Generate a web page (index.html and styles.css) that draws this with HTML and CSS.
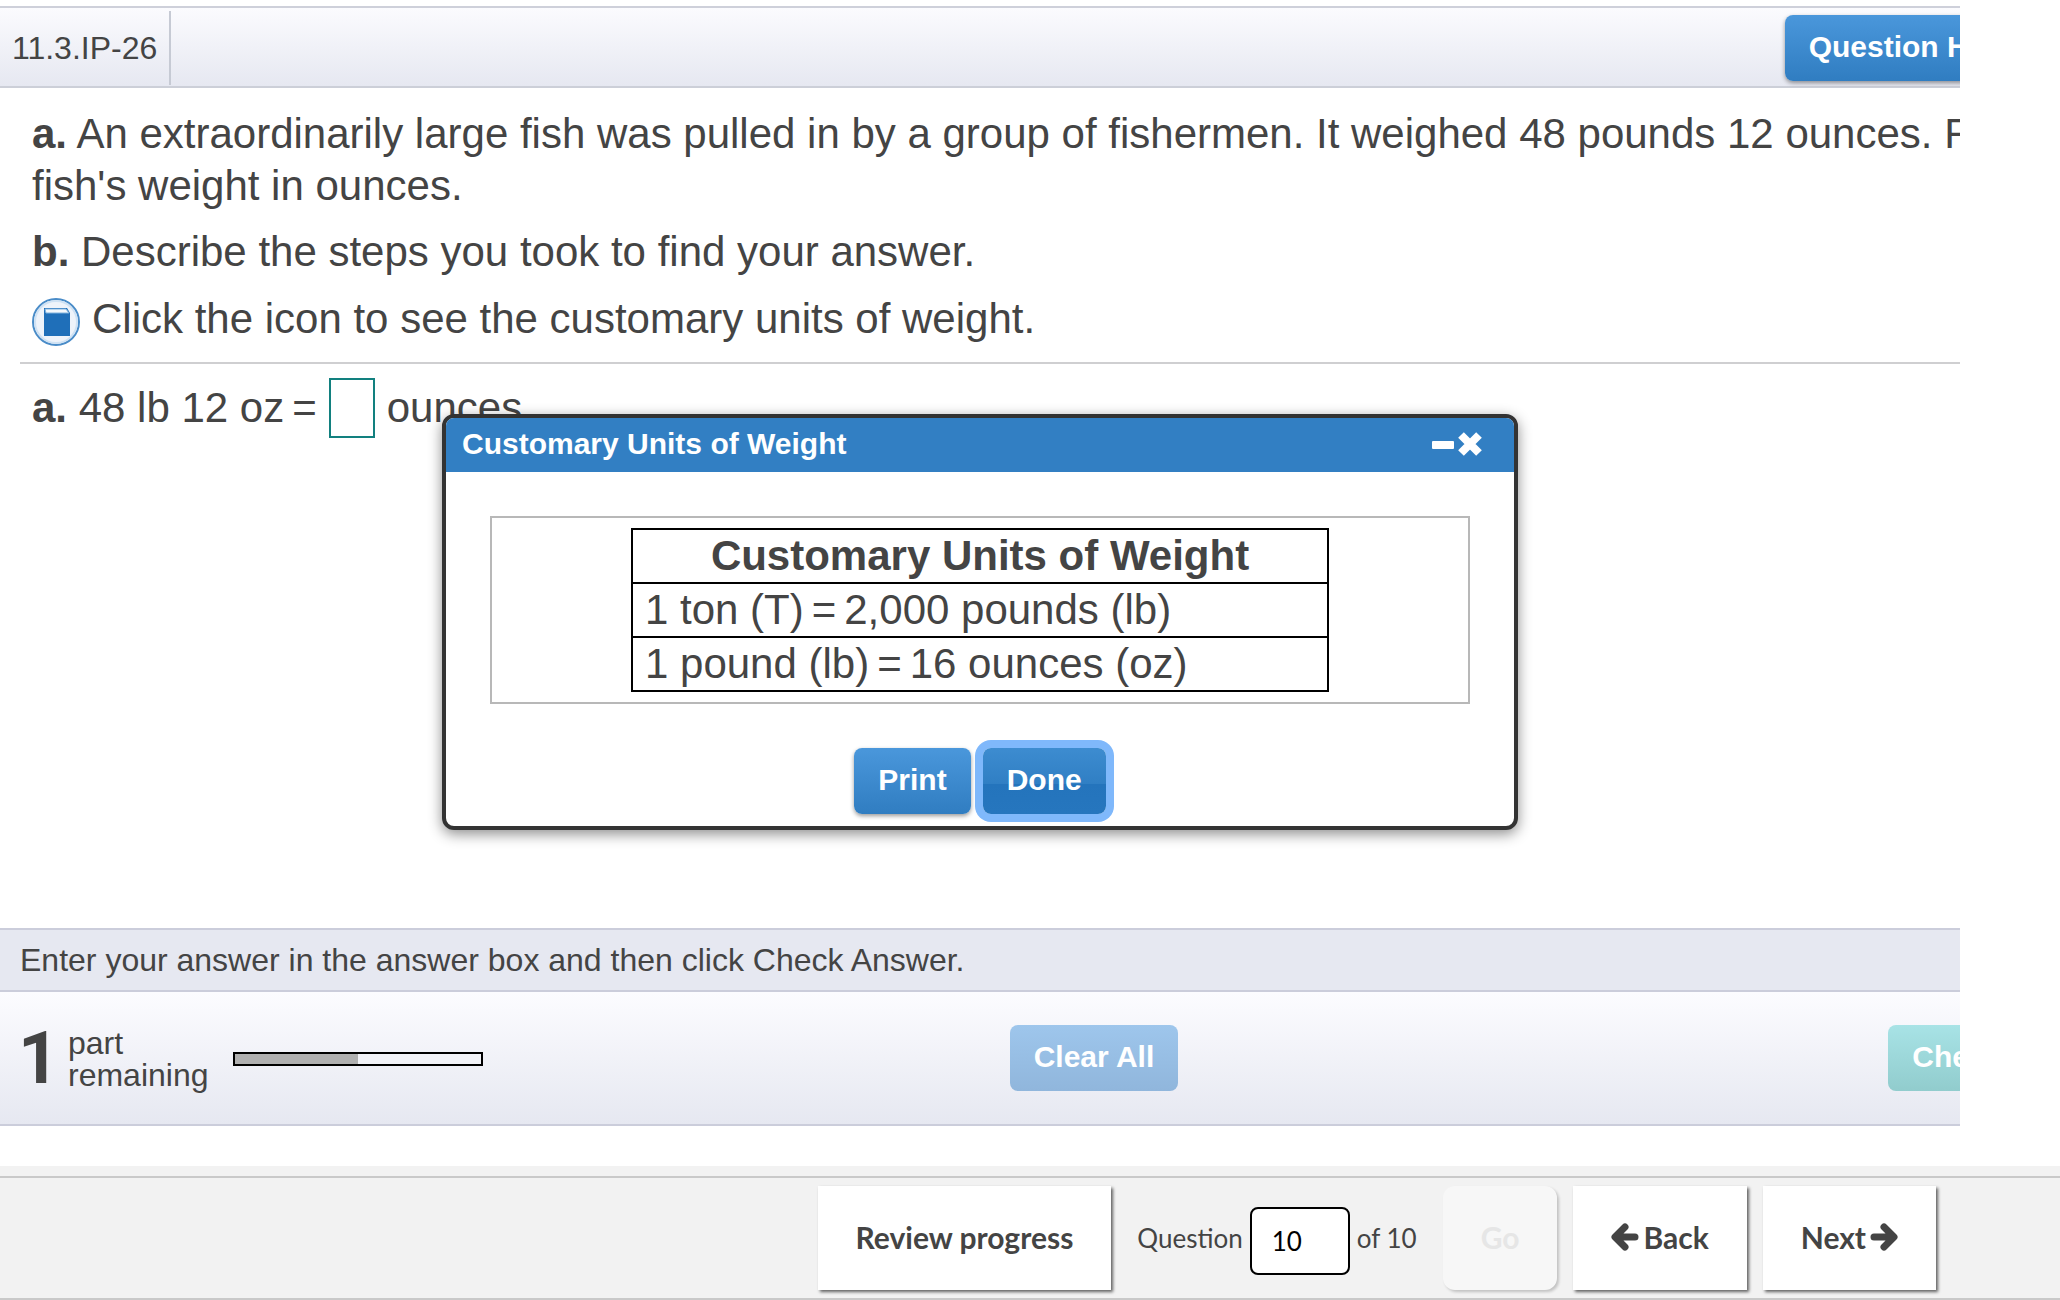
FILE: index.html
```
<!DOCTYPE html>
<html lang="en">
<head>
<meta charset="utf-8">
<title>11.3.IP-26</title>
<link rel="stylesheet" href="styles.css">
</head>

<body>
<main class="player">
    <header class="topbar">
        <div class="exercise-id">11.3.IP-26</div>
        <button type="button" class="btn help">Question Help</button>
    </header>

    <div class="question">
        <p><b>a.</b> An extraordinarily large fish was pulled in by a group of fishermen. It weighed 48 pounds 12 ounces. Find the fish's weight in ounces.</p>
        <p><b>b.</b> Describe the steps you took to find your answer.</p>
        <p class="resource">
            <button type="button" class="icon-btn" aria-label="Customary units of weight">
                <svg width="48" height="48" viewBox="0 0 48 48">
                    <circle cx="24" cy="24" r="23" fill="#eef3fa" stroke="#4a8cc8" stroke-width="2"/>
                    <circle cx="24" cy="24" r="21" fill="none" stroke="#cfe2f4" stroke-width="2"/>
                    <path d="M12 10h23l3 5v23H12z" fill="#1f6fb9"/>
                    <path d="M13 11h21l3 4H14z" fill="#f4f8fc" stroke="#7fb2de"/>
                </svg>
            </button>
            Click the icon to see the customary units of weight.
        </p>
    </div>

    <div class="answer">
        <label for="ounces"><b>a.</b> 48 lb 12 oz<span class="eq">=</span></label>
        <input type="text" id="ounces" class="answer-box">
        <span>ounces</span>
    </div>

    <div class="instruction">Enter your answer in the answer box and then click Check Answer.</div>

    <div class="bottombar">
        <div class="parts">
            <span class="parts-count">1</span>
            <label for="done-parts" class="parts-label">part<br>remaining</label>
            <progress id="done-parts" class="parts-bar" value="1" max="2"></progress>
        </div>
        <button type="button" class="btn clear" disabled>Clear All</button>
        <button type="button" class="btn check" disabled>Check Answer</button>
    </div>

    <!-- popup over the question -->
    <section class="dialog" role="dialog" aria-labelledby="dialog-title">
        <div class="dialog-title">
            <h2 id="dialog-title">Customary Units of Weight</h2>
            <button type="button" class="icon-btn" aria-label="Minimize">
                <svg width="22" height="24" viewBox="0 0 22 24"><rect y="9" width="22" height="8" rx="1" fill="#fff"/></svg>
            </button>
            <button type="button" class="icon-btn" aria-label="Close">
                <svg width="24" height="24" viewBox="0 0 24 24"><path d="M3 3l18 18M21 3L3 21" stroke="#fff" stroke-width="8"/></svg>
            </button>
        </div>
        <div class="frame">
            <table class="units">
                <thead>
                    <tr><th>Customary Units of Weight</th></tr>
                </thead>
                <tbody>
                    <tr><td>1 ton (T)<span class="eq">=</span>2,000 pounds (lb)</td></tr>
                    <tr><td>1 pound (lb)<span class="eq">=</span>16 ounces (oz)</td></tr>
                </tbody>
            </table>
        </div>
        <div class="dialog-buttons">
            <button type="button" class="btn">Print</button>
            <button type="button" class="btn focused">Done</button>
        </div>
    </section>
</main>

<footer class="footer">
    <nav class="nav">
        <button type="button" class="nav-btn">Review progress</button>
        <div class="jump">
            <label for="number">Question</label>
            <input type="text" id="number" class="number" value="10">
            <span>of 10</span>
        </div>
        <button type="button" class="nav-btn go" disabled>Go</button>
        <button type="button" class="nav-btn">
            <svg width="28" height="28" viewBox="0 0 28 28"><path d="M14 4L4 14l10 10M5 14h19" fill="none" stroke="#444" stroke-width="7" stroke-linecap="round" stroke-linejoin="round"/></svg>
            Back
        </button>
        <button type="button" class="nav-btn">
            Next
            <svg width="28" height="28" viewBox="0 0 28 28"><path d="M14 4l10 10-10 10M23 14H4" fill="none" stroke="#444" stroke-width="7" stroke-linecap="round" stroke-linejoin="round"/></svg>
        </button>
    </nav>
</footer>
</body>
</html>
```
FILE: styles.css
```
*{
    box-sizing: border-box;
}
body{
    display: flex;
    flex-direction: column;
    min-height: 100vh;
    margin: 0;
    padding-top: 6px;
    background: #fff;
    color: #444;
    font-family: "Liberation Sans", Arial, sans-serif;
    font-size: 42px;
    line-height: 52px;
}
button, input{
    font-family: inherit;
}

/* exercise pane, its rows run on past the right edge */
.player{
    position: relative;
    flex: 1;
    display: flex;
    flex-direction: column;
    margin-right: 100px;
    overflow: hidden;
}
.topbar, .question, .answer, .instruction, .bottombar{
    width: calc(100% + 228px);
}
.topbar{
    display: flex;
    justify-content: space-between;
    align-items: center;
    height: 82px;
    padding: 2px 152px 0 0;
    border-top: 2px solid #ced0da;
    border-bottom: 2px solid #cccfd8;
    background: linear-gradient(#fbfbfe, #e6e8f1);
}
.exercise-id{
    padding: 0 12px;
    border-right: 2px solid #c6cad4;
    font-size: 32px;
    line-height: 74px;
}
.btn{
    height: 66px;
    padding: 0 24px 2px;
    border: 0;
    border-radius: 8px;
    box-shadow: 0 2px 4px rgba(0, 0, 0, 0.4);
    background: linear-gradient(#4a97db, #307dc1);
    color: #fff;
    font-size: 30px;
    font-weight: bold;
}
.icon-btn{
    padding: 0;
    border: 0;
    background: none;
    line-height: 0;
}
.icon-btn svg{
    display: block;
}

.question{
    margin-left: 20px;
    padding: 20px 20px 16px 12px;
    border-bottom: 2px solid #cfcfd1;
}
.question p{
    margin: 0 0 14px;
}
.question .resource{
    display: flex;
    align-items: center;
    gap: 12px;
    margin: 0;
}
.resource .icon-btn{
    padding-top: 6px;
}
.answer{
    flex: 1;
    display: flex;
    align-items: flex-start;
    gap: 12px;
    padding: 14px 32px;
    line-height: 60px;
}
.eq{
    margin: 0 8px;
}
.answer .eq{
    margin-right: 0;
}
.answer-box{
    width: 46px;
    height: 60px;
    padding: 0 8px;
    border: 2px solid #12807f;
    font-size: 32px;
}
.instruction{
    padding: 0 20px;
    border-top: 2px solid #cbcddb;
    border-bottom: 2px solid #cbcddb;
    background: #e6e8f1;
    font-size: 32px;
    line-height: 60px;
}
.bottombar{
    display: grid;
    grid-template-columns: 1fr auto 1fr;
    align-items: center;
    height: 134px;
    margin-bottom: 40px;
    padding: 0 18px;
    border-bottom: 2px solid #cbcddb;
    background: linear-gradient(#fcfcff, #e6e8f1);
}
.parts{
    display: flex;
    align-items: center;
    padding-top: 2px;
}
.parts-count{
    width: 50px;
    font-family: Roboto, sans-serif;
    font-size: 72px;
    font-weight: bold;
}
.parts-label{
    margin-right: 24px;
    font-size: 32px;
    line-height: 32px;
}
.parts-bar{
    appearance: none;
    width: 250px;
    height: 14px;
    border: 2px solid #000;
    background: #f2f3f8;
}
.parts-bar::-webkit-progress-bar{
    background: #f2f3f8;
}
.parts-bar::-webkit-progress-value{
    background: #b0b0b0;
}
.clear{
    box-shadow: none;
    background: linear-gradient(#9ec6ec, #90b6dc);
}
.check{
    justify-self: end;
    margin-right: 28px;
    box-shadow: none;
    background: linear-gradient(#a8e3e6, #91cccd);
}

.dialog{
    position: absolute;
    top: 408px;
    left: 0;
    right: 0;
    width: 1076px;
    max-width: 100%;
    margin: 0 auto;
    border: 4px solid #333;
    border-radius: 12px;
    box-shadow: 0 4px 14px rgba(0, 0, 0, 0.45);
    background: #fff;
}
.dialog-title{
    display: flex;
    align-items: center;
    gap: 4px;
    height: 54px;
    padding: 0 32px 2px 16px;
    border-radius: 8px 8px 0 0;
    background: #327fc3;
    color: #fff;
}
.dialog-title h2{
    flex: 1;
    margin: 0;
    font-size: 30px;
}
.frame{
    margin: 44px;
    padding: 10px;
    border: 2px solid #b8b8b8;
}
.units{
    width: 698px;
    max-width: 100%;
    margin: 0 auto;
    border-collapse: collapse;
}
.units th, .units td{
    padding: 0 12px;
    border: 2px solid #000;
}
.units td{
    text-align: left;
}
.dialog-buttons{
    display: flex;
    justify-content: center;
    gap: 12px;
    margin-bottom: 12px;
}
.focused{
    box-shadow: 0 0 0 8px #7fb8fb;
    background: linear-gradient(#3d8cd0, #307fc4 54%, #2474bc 54%, #2676be);
}

.footer{
    padding-top: 10px;
    background: #f2f2f2;
    color: #444;
    font-family: Lato, sans-serif;
    font-size: 26px;
}
.nav{
    display: flex;
    justify-content: flex-end;
    align-items: center;
    gap: 16px;
    padding: 8px 124px 8px 20px;
    border-top: 2px solid #c9c9c9;
    border-bottom: 2px solid #c9c9c9;
}
.nav-btn{
    display: flex;
    justify-content: center;
    align-items: center;
    gap: 4px;
    height: 104px;
    padding: 0 38px 2px;
    border: 0;
    box-shadow: 2px 2px 3px rgba(0, 0, 0, 0.6);
    background: #fff;
    color: #444;
    font-size: 30px;
    font-weight: bold;
}
.jump{
    display: flex;
    align-items: center;
    gap: 7px;
    margin: 0 10px;
}
.number{
    width: 100px;
    height: 68px;
    margin-top: 6px;
    padding: 0 20px;
    border: 2px solid #000;
    border-radius: 8px;
    background: #fff;
    color: #000;
    font-size: 26px;
}
.go{
    border-radius: 12px;
    box-shadow: 2px 2px 3px rgba(0, 0, 0, 0.2);
    background: #f7f7f7;
    color: #e6e6e6;
}
```
